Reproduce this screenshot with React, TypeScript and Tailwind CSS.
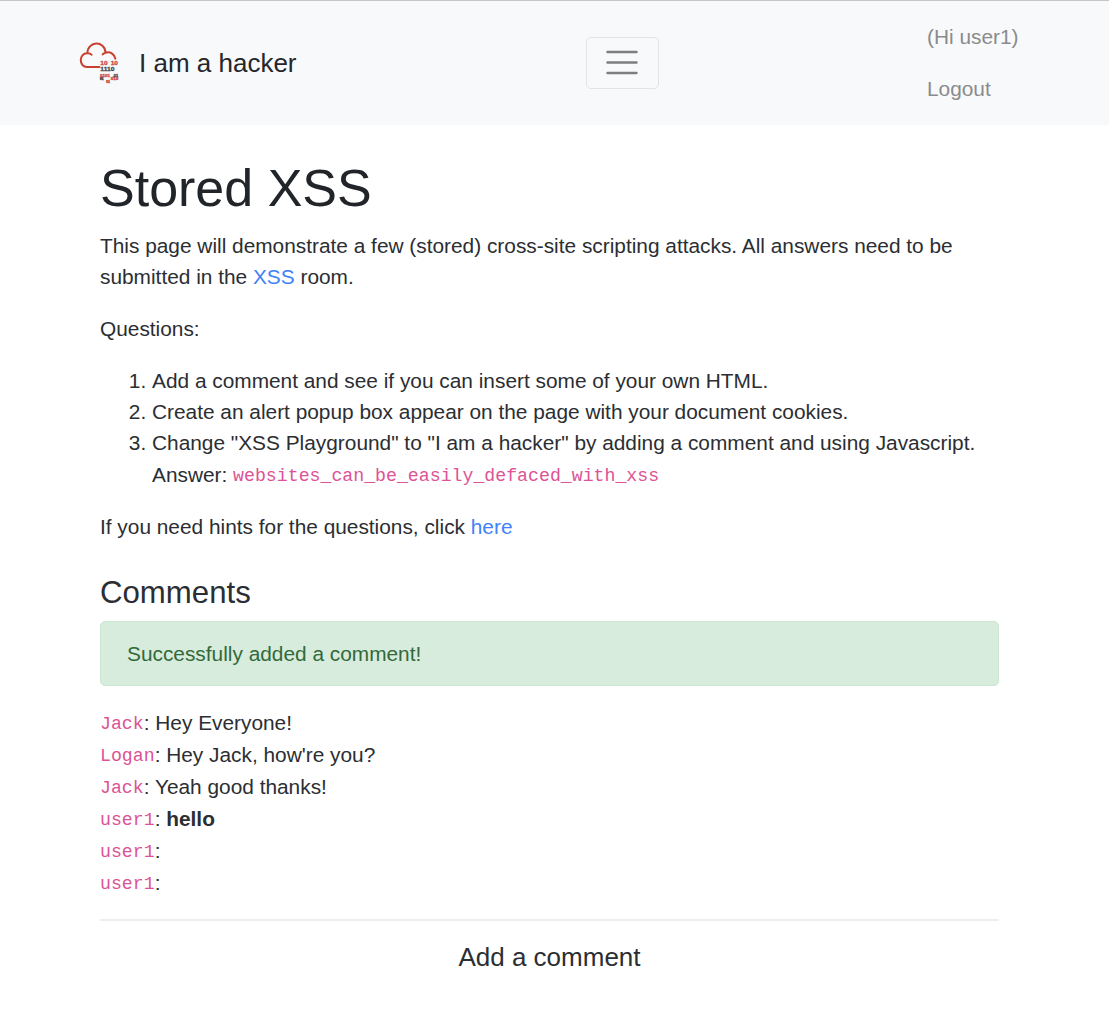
import React from "react";

function Code({ children }: { children: React.ReactNode }) {
  return <code className="relative -top-px font-['Liberation_Mono',monospace] text-[18.22px] leading-none text-[#dc5396]">{children}</code>;
}

function Logo() {
  return (
    <svg className="h-[42px] w-[42px] shrink-0" viewBox="27 20 126 126" fill="none">
      <path
        d="M88 95H51C26 95 26 53 52 54C53 16 104 14 107 52C122 48 134 58 136 70M52 54Q59 53 65 58M107 52Q101 53 98 57"
        stroke="#c8402f"
        strokeWidth="6"
        strokeLinecap="round"
      />
      <g fontFamily="Liberation Sans" fontWeight="bold" strokeWidth="1">
        <g fill="#cf4b4b" stroke="#cf4b4b">
          <text x="91" y="89" fontSize="18" textLength="22" lengthAdjust="spacingAndGlyphs">10</text>
          <text x="122" y="89" fontSize="18" textLength="22" lengthAdjust="spacingAndGlyphs">10</text>
          <text x="90" y="124" fontSize="13" textLength="30" lengthAdjust="spacingAndGlyphs">0101</text>
          <text x="122" y="134" fontSize="12" textLength="23" lengthAdjust="spacingAndGlyphs">010</text>
          <text x="109" y="142" fontSize="8" textLength="11" lengthAdjust="spacingAndGlyphs">01</text>
        </g>
        <g fill="#4a4a4c" stroke="#4a4a4c">
          <text x="91" y="108" fontSize="18" textLength="42" lengthAdjust="spacingAndGlyphs">1110</text>
          <text x="128" y="124" fontSize="13" textLength="17" lengthAdjust="spacingAndGlyphs">.01</text>
          <text x="90" y="133" fontSize="8" textLength="11" lengthAdjust="spacingAndGlyphs">01</text>
        </g>
      </g>
    </svg>
  );
}

const comments = [
  ["Jack", "Hey Everyone!"],
  ["Logan", "Hey Jack, how're you?"],
  ["Jack", "Yeah good thanks!"],
  ["user1", "hello"],
  ["user1", ""],
  ["user1", ""],
];

export default function App() {
  return (
    <div className="h-[1014px] w-[1109px] overflow-hidden bg-white font-['Liberation_Sans',sans-serif] text-[20.85px] leading-[31.3px] text-[#2b2e32]">
      <header className="flex h-[125px] items-center border-t border-[#c5c6c8] bg-[#f8f9fb] pl-[79px]">
        <Logo />
        <span className="ml-[18px] w-[447px] pt-px text-[26px] text-[#24272b]">I am a hacker</span>
        <button className="flex h-[52px] w-[73px] items-center justify-center rounded-[5px] border-[1.5px] border-[#e3e4e6]">
          <svg className="mr-px h-[32px] w-[32px]" viewBox="0 0 32 32" stroke="#7d7e7f" strokeWidth="2.4" strokeLinecap="round">
            <path d="M1.5 5H30.5M1.5 15.5H30.5M1.5 26H30.5" />
          </svg>
        </button>
        <nav className="ml-[268px] flex flex-col text-[#8a8b8c]">
          <span className="h-[52px]">(Hi user1)</span>
          <span>Logout</span>
        </nav>
      </header>
      <main className="ml-[100px] w-[899px] pt-[32px]">
        <h1 className="text-[52px] leading-[63px] text-[#212529]">Stored XSS</h1>
        <p className="mt-[10px]">
          This page will demonstrate a few (stored) cross-site scripting attacks. All answers need to be submitted in the <a className="text-[#3f82fa]">XSS</a> room.
        </p>
        <p className="mt-[20px]">Questions:</p>
        <ol className="mt-[21px] list-decimal pl-[52px]">
          <li>Add a comment and see if you can insert some of your own HTML.</li>
          <li>Create an alert popup box appear on the page with your document cookies.</li>
          <li>
            Change "XSS Playground" to "I am a hacker" by adding a comment and using Javascript. Answer: <Code>websites_can_be_easily_defaced_with_xss</Code>
          </li>
        </ol>
        <p className="mt-[20.5px]">
          If you need hints for the questions, click <a className="text-[#3f82fa]">here</a>
        </p>
        <h3 className="mt-[32px] text-[31.2px] leading-[38px]">Comments</h3>
        <div className="mt-[9px] h-[65px] rounded-[5px] border border-[#cbe7d1] bg-[#d7ecdc] px-[26px] pt-[16px] text-[#33693a]">Successfully added a comment!</div>
        <div className="mt-[21px]">
          {comments.map(([name, text], i) => (
            <div key={i} className="h-[32px] leading-[32px]">
              <Code>{name}</Code>: {text === "hello" ? <b>{text}</b> : text}
            </div>
          ))}
        </div>
        <hr className="mt-[20px] border-t-2 border-[#eeeeef]" />
        <h4 className="mt-[21px] text-center text-[26px]">Add a comment</h4>
      </main>
    </div>
  );
}
